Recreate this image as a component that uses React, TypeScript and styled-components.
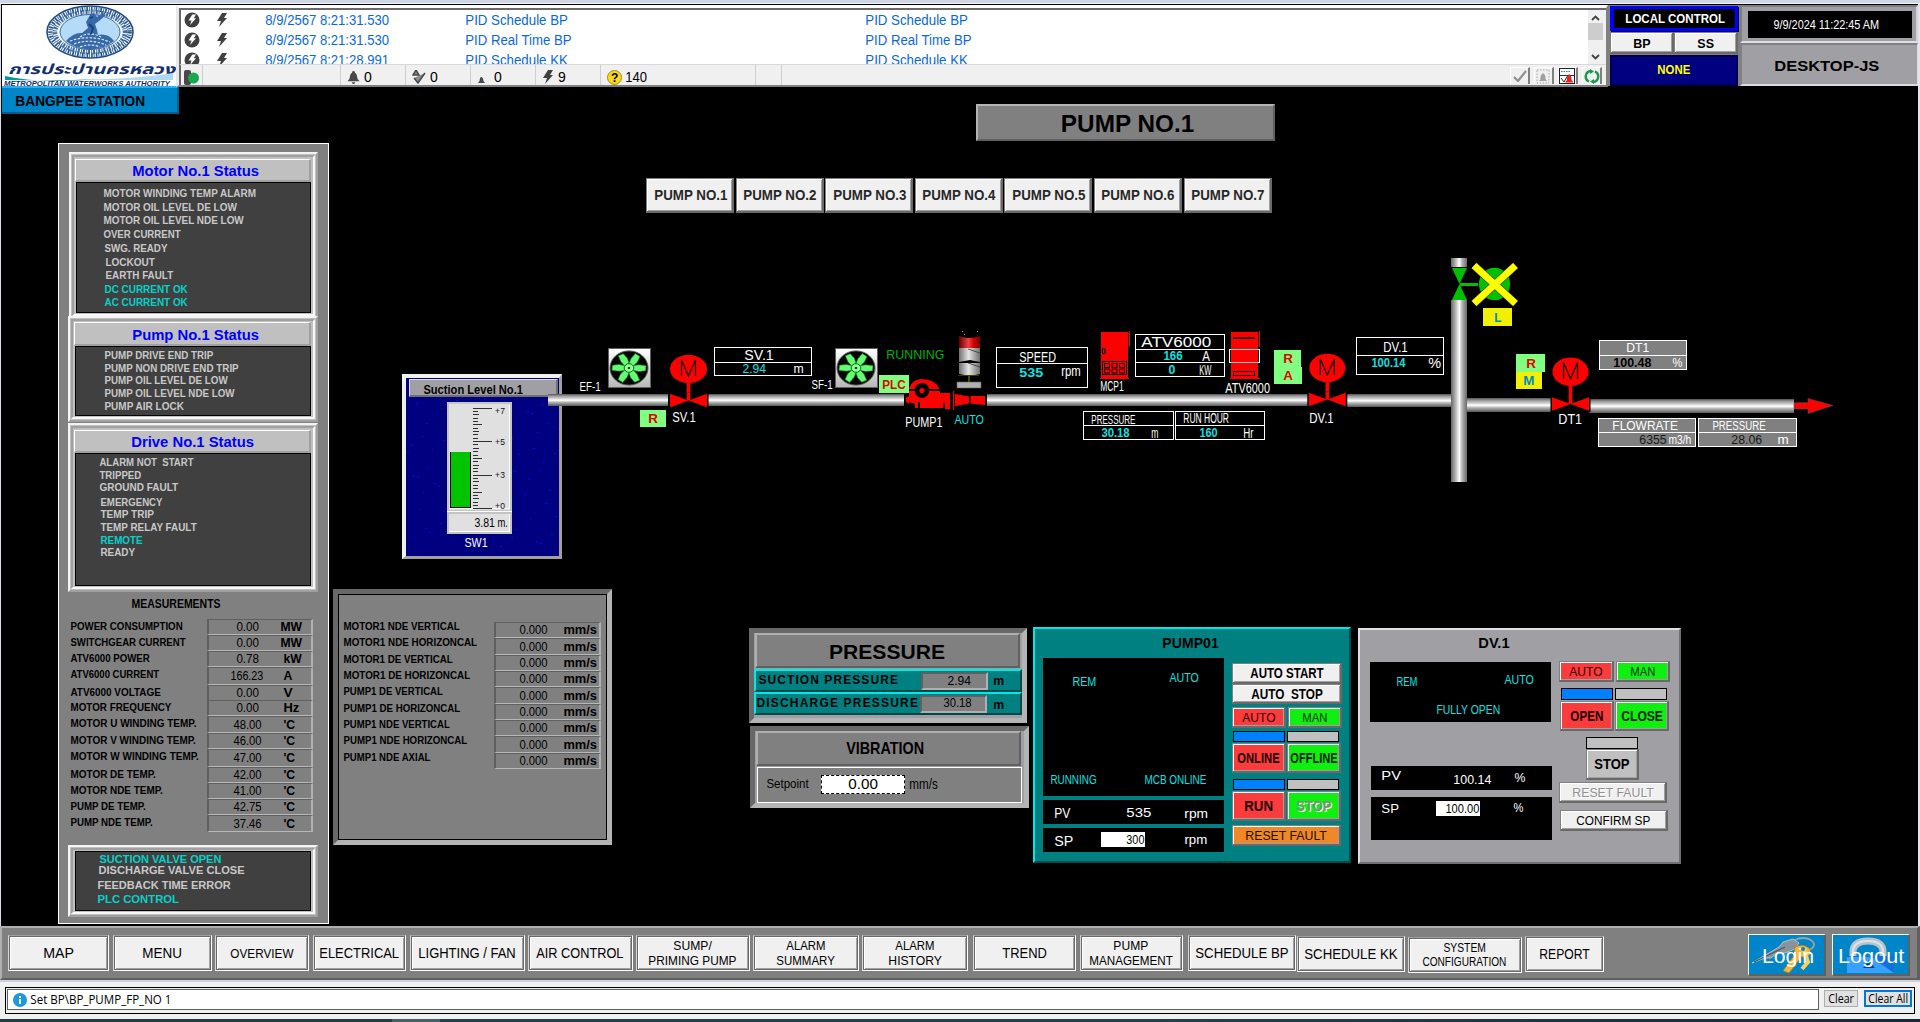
import React, { useLayoutEffect, useRef } from "react";
import styled, { createGlobalStyle, css } from "styled-components";

const Global = createGlobalStyle`
  *, *::before, *::after { box-sizing: border-box; }
  html, body { margin: 0; padding: 0; background: #000; overflow: hidden; }
  body { font-family: "Liberation Sans", Arial, sans-serif; font-size: 12px; color: #000; }
`;

/* ---------- text that is stretched to a fixed width ---------- */

const FitBox = styled.span<{ $w: number; $s: number; $b?: boolean; $c?: string; $ml: number; $mt: number; $f?: string; $etched?: boolean }>`
  display: block;
  flex: none;
  width: ${(p) => p.$w}px;
  height: ${(p) => p.$s + 2}px;
  line-height: ${(p) => p.$s + 2}px;
  margin: ${(p) => p.$mt}px 0 0 ${(p) => p.$ml}px;
  font-size: ${(p) => p.$s}px;
  font-weight: ${(p) => (p.$b ? 700 : 400)};
  color: ${(p) => p.$c || "#000"};
  white-space: pre;
  ${(p) => p.$f && css`font-family: ${p.$f};`}
  ${(p) => p.$etched && css`text-shadow: 1px 1px 0 #fff;`}
`;
const FitInk = styled.span`
  display: inline-block;
  transform-origin: 0 50%;
`;

type FitProps = {
  children: string; w: number; s?: number; b?: boolean; c?: string;
  ml?: number; mt?: number; f?: string; etched?: boolean; stretch?: boolean;
};

function Fit({ children, w, s = 12, b, c, ml = 0, mt = 0, f, etched, stretch }: FitProps) {
  const ref = useRef<HTMLSpanElement>(null);
  useLayoutEffect(() => {
    const el = ref.current;
    if (!el) return;
    const target = w + s * 0.1;
    const natural = el.offsetWidth;
    const shift = `translateX(${-s * 0.05}px)`;
    if (!stretch && target / natural > 1.1 && children.length > 4) {
      el.style.letterSpacing = `${(target - natural) / (children.length - 1)}px`;
      el.style.transform = shift;
    } else {
      el.style.transform = `${shift} scaleX(${target / natural})`;
    }
  }, []);
  return (
    <FitBox $w={w} $s={s} $b={b} $c={c} $ml={ml} $mt={mt} $f={f} $etched={etched}>
      <FitInk ref={ref}>{children}</FitInk>
    </FitBox>
  );
}

const CYAN = "#14e0e0";
const COND = '"Open Sans", "Noto Sans", sans-serif';

/* ---------- frame ---------- */

const Screen = styled.div`
  width: 1920px;
  height: 1022px;
  display: flex;
  flex-direction: column;
  background: #000;
  overflow: hidden;
`;
const TopEdge = styled.div`
  height: 4px;
  flex: none;
  background: #cfd6e4;
  border-bottom: 1px solid #f4f4f8;
`;
const Header = styled.header`
  display: flex;
  height: 82px;
  flex: none;
  padding: 1px 0 0 0;
  border-left: 1px solid #d8dce6;
  border-right: 2px solid #e4e4ea;
`;
const LogoCell = styled.div`
  width: 174px;
  margin-left: 1px;
  height: 81px;
  background: #fff;
  flex: none;
`;

/* ---------- alarm banner ---------- */

const AlarmPanel = styled.div`
  width: 1432px;
  height: 82px;
  flex: none;
  background: #f0f0f0;
  border: 3px solid #fff;
  border-left-color: #e8e8e8;
  border-right: 2px solid #808080;
  border-bottom: 2px solid #808080;
  display: flex;
  flex-direction: column;
  position: relative;
  z-index: 1;
`;
const AlarmTop = styled.div`
  display: flex;
  height: 56px;
  flex: none;
  border-top: 2px solid #696969;
  border-left: 2px solid #696969;
  padding-right: 2px;
`;
const AlarmList = styled.div`
  flex: 1;
  background: #fff;
  overflow: hidden;
`;
const AlarmRow = styled.div`
  height: 20px;
  display: grid;
  grid-template-columns: 32px 50px 200px 400px 200px;
  align-items: center;
  padding-left: 3px;
`;
const Scroll = styled.div`
  width: 16px;
  background: #f0f0f0;
  display: flex;
  flex-direction: column;
  align-items: center;
  justify-content: space-between;
  padding: 5px 1px 4px 0;
`;
const Thumb = styled.div`
  width: 15px;
  height: 17px;
  background: #cdcdcd;
  margin-bottom: 12px;
`;
const AlarmStatus = styled.div`
  display: flex;
  height: 21px;
  border-left: 2px solid #696969;
  border-top: 1px solid #d8d8d8;
  padding-right: 4px;
`;
const StatusCell = styled.div<{ $w: number }>`
  width: ${(p) => p.$w}px;
  border-right: 1px solid #cfcfcf;
  display: flex;
  align-items: center;
  gap: 4px;
  padding: 4px 0 0 6px;
  font-size: 14px;
`;
const ToolRow = styled.div`
  margin-left: auto;
  display: flex;
  gap: 4px;
  padding-top: 2px;
`;
const Tool = styled.div`
  width: 20px;
  height: 17px;
  border-right: 2px solid #808080;
  border-left: 1px solid #fff;
  border-top: 1px solid #fff;
  display: flex;
  align-items: center;
  justify-content: center;
`;

/* ---------- header right ---------- */

const LocalPanel = styled.div`
  width: 132px;
  background: #808080;
  padding: 1px 2px 2px;
  display: grid;
  grid-template: 25px 22px 31px / 1fr;
  row-gap: 1px;
`;
const LocalTitle = styled.div`
  background: #000;
  border: 4px solid #0000ff;
  border-top-width: 3px;
  border-right-width: 3px;
  border-bottom-width: 3px;
  box-shadow: 1px 1px 0 #000050;
  display: flex;
  align-items: center;
  justify-content: center;
`;
const LocalButtons = styled.div`
  display: grid;
  grid-template-columns: 1fr 1fr;
`;
const LocalNone = styled.div`
  background: #000080;
  border: 2px solid #00004c;
  display: flex;
  align-items: center;
  justify-content: center;
  padding-bottom: 2px;
`;
const ClockPanel = styled.div`
  width: 178px;
  display: flex;
  flex-direction: column;
  background: #a0a0a4;
`;
const ClockBox = styled.div`
  height: 38px;
  border: 2px solid #808084;
  border-bottom-color: #e0e0e4;
  border-right-color: #d4d4d8;
  padding: 4px 4px 3px 6px;
  display: flex;
`;
const ClockFace = styled.div`
  flex: 1;
  background: #000;
  display: flex;
  align-items: center;
  padding-left: 26px;
`;
const HostBox = styled.div`
  flex: 1;
  border-top: 2px solid #808084;
  border-left: 2px solid #808084;
  border-bottom: 2px solid #dcdce0;
  border-right: 1px solid #dcdce0;
  display: flex;
  align-items: center;
  padding-left: 33px;
`;

/* ---------- buttons ---------- */

const Btn = styled.div<{ $w?: number; $h?: number; $bg?: string; $ml?: number }>`
  ${(p) => p.$w && css`width: ${p.$w}px;`}
  ${(p) => p.$h && css`height: ${p.$h}px;`}
  margin-left: ${(p) => p.$ml || 0}px;
  flex: none;
  background: ${(p) => p.$bg || "#f0f0f0"};
  border: 1px solid #808080;
  border-right: 2px solid #696969;
  border-bottom: 2px solid #696969;
  box-shadow: inset 1px 1px 0 #fff, inset -1px -1px 0 #a0a0a0;
  display: flex;
  flex-direction: column;
  align-items: center;
  justify-content: center;
`;
const Lamp = styled.div<{ $on?: boolean; $ml?: number; $h?: number }>`
  width: 52px;
  height: ${(p) => p.$h || 11}px;
  flex: none;
  margin-left: ${(p) => p.$ml || 0}px;
  border: 1px solid #000;
  background: ${(p) => (p.$on ? "#0080ff" : "#c0c0c0")};
`;

/* ---------- main area ---------- */

const Main = styled.main`
  display: flex;
  height: 840px;
  flex: none;
  border-left: 1px solid #d8dce6;
  border-right: 2px solid #e4e4ea;
`;
const LeftColumn = styled.div`
  width: 332px;
  flex: none;
`;
const Station = styled.div`
  width: 177px;
  height: 28px;
  margin-left: 1px;
  background: #0086c8;
  border-top: 2px solid #28b0f0;
  border-right: 2px solid #006090;
  border-bottom: 2px solid #005c8c;
  display: flex;
  align-items: center;
  padding: 2px 0 0 14px;
`;
const Sidebar = styled.aside`
  width: 271px;
  height: 781px;
  margin: 29px 0 0 57px;
  background: #808080;
  border: 1px solid #fff;
  padding-top: 8px;
`;
const Bevel = styled.div<{ $h: number; $ml: number; $mt?: number }>`
  width: ${(p) => (p.$ml === 10 ? 249 : 250)}px;
  height: ${(p) => p.$h}px;
  margin: ${(p) => p.$mt || 0}px 0 0 ${(p) => p.$ml}px;
  background: #c0c0c0;
  border: 2px solid #f4f4f4;
  border-right-color: #a0a0a0;
  border-bottom-color: #a0a0a0;
  padding: 1px;
`;
const BevelInner = styled.div`
  height: 100%;
  border: 2px solid #a0a0a0;
  border-right-color: #f8f8f8;
  border-bottom-color: #f8f8f8;
  padding: 1px 2px 1px 1px;
  display: flex;
  flex-direction: column;
`;
const Plate = styled.div<{ $h: number; $pl: number; $mt?: number }>`
  height: ${(p) => p.$h}px;
  margin-top: ${(p) => p.$mt || 0}px;
  flex: none;
  background: #c0c0c0;
  border: 1px solid #fff;
  border-right: 2px solid #a0a0a0;
  border-bottom: 2px solid #a0a0a0;
  display: flex;
  align-items: center;
  padding-left: ${(p) => p.$pl}px;
`;
const Dark = styled.div<{ $pt: number }>`
  flex: 1;
  background: #404040;
  border: 1px solid #000;
  padding-top: ${(p) => p.$pt}px;
  margin-left: 1px;
`;
const Line = styled.div<{ $gap: number; $pl: number }>`
  height: 12px;
  margin-top: ${(p) => p.$gap}px;
  padding-left: ${(p) => p.$pl}px;
  display: flex;
  align-items: center;
`;

type Row = [text: string, indent: number, width: number, center: number, on?: boolean];

function StatusLines({ rows, size = 11 }: { rows: Row[]; size?: number }) {
  return (
    <>
      {rows.map(([t, x, w, y, on], i) => (
        <Line key={t} $pl={x} $gap={i ? y - rows[i - 1][3] - 12 : 0}>
          <Fit w={w} s={size} b c={on ? "#08d0c8" : "#c8c8c8"}>{t}</Fit>
        </Line>
      ))}
    </>
  );
}

const motorRows: Row[] = [
  ["MOTOR WINDING TEMP ALARM", 27, 151, 193],
  ["MOTOR OIL LEVEL DE LOW", 27, 132, 207],
  ["MOTOR OIL LEVEL NDE LOW", 27, 139, 220],
  ["OVER CURRENT", 27, 76, 234],
  ["SWG. READY", 28, 62, 248],
  ["LOCKOUT", 29, 48, 262],
  ["EARTH FAULT", 29, 67, 275],
  ["DC CURRENT OK", 28, 82, 289, true],
  ["AC CURRENT OK", 28, 82, 302, true],
];
const pumpRows: Row[] = [
  ["PUMP DRIVE END TRIP", 29, 108, 355],
  ["PUMP NON DRIVE END TRIP", 29, 133, 368],
  ["PUMP OIL LEVEL DE LOW", 29, 122, 380],
  ["PUMP OIL LEVEL NDE LOW", 29, 129, 393],
  ["PUMP AIR LOCK", 29, 78, 406],
];
const driveRows: Row[] = [
  ["ALARM NOT  START", 24, 93, 461],
  ["TRIPPED", 24, 41, 474],
  ["GROUND FAULT", 24, 78, 486],
  ["EMERGENCY", 25, 61, 501],
  ["TEMP TRIP", 25, 52, 513],
  ["TEMP RELAY FAULT", 25, 95, 526],
  ["REMOTE", 25, 41, 539, true],
  ["READY", 25, 34, 551],
];
const valveRows: Row[] = [
  ["SUCTION VALVE OPEN", 24, 121, 859, true],
  ["DISCHARGE VALVE CLOSE", 23, 145, 870],
  ["FEEDBACK TIME ERROR", 22, 132, 885],
  ["PLC CONTROL", 22, 80, 899, true],
];

const MeasureTitle = styled.div`
  height: 27px;
  padding: 5px 0 0 73px;
`;
const MeasureRow = styled.div<{ $h: number; $w: number; $valW: number }>`
  height: ${(p) => p.$h}px;
  display: grid;
  grid-template-columns: ${(p) => p.$w}px ${(p) => p.$valW}px;
`;
const MeasureLabel = styled.div<{ $pt: number }>`
  padding: ${(p) => p.$pt}px 0 0 0;
`;
const MeasureValue = styled.div`
  border-top: 1px solid #606060;
  border-left: 2px solid #606060;
  border-right: 2px solid #b0b0b0;
  border-bottom: 1px solid #b8b8b8;
  display: grid;
  grid-template-columns: 1fr 38px;
  align-items: center;
  justify-items: center;
`;
const UnitCell = styled.div`
  justify-self: start;
`;

type Measure = [label: string, w: number, value: string, vw: number, unit: string, uw: number, h: number];
const measures: Measure[] = [
  ["POWER CONSUMPTION", 111, "0.00", 21, "MW", 20, 16],
  ["SWITCHGEAR CURRENT", 114, "0.00", 21, "MW", 20, 16],
  ["ATV6000 POWER", 78, "0.78", 21, "kW", 17, 16],
  ["ATV6000 CURRENT", 88, "166.23", 32, "A", 8, 18],
  ["ATV6000 VOLTAGE", 89, "0.00", 21, "V", 8, 15],
  ["MOTOR FREQUENCY", 100, "0.00", 21, "Hz", 15, 16],
  ["MOTOR U WINDING TEMP.", 125, "48.00", 27, "'C", 11, 17],
  ["MOTOR V WINDING TEMP.", 124, "46.00", 27, "'C", 11, 16],
  ["MOTOR W WINDING TEMP.", 127, "47.00", 27, "'C", 11, 18],
  ["MOTOR DE TEMP.", 84, "42.00", 27, "'C", 11, 16],
  ["MOTOR NDE TEMP.", 91, "41.00", 27, "'C", 11, 16],
  ["PUMP DE TEMP.", 74, "42.75", 27, "'C", 11, 16],
  ["PUMP NDE TEMP.", 81, "37.46", 27, "'C", 11, 17],
];
const MeasureTable = styled.div`
  padding-left: 12px;
  margin-bottom: 13px;
`;

/* ---------- process area ---------- */

const Process = styled.div`
  flex: 1;
  display: flex;
  flex-direction: column;
`;
const TitlePlate = styled.div`
  width: 299px;
  height: 37px;
  margin: 18px 0 0 643px;
  background: #808080;
  border: 2px solid #b4b4b4;
  border-right-color: #606060;
  border-bottom-color: #606060;
  display: flex;
  align-items: center;
  justify-content: center;
  padding: 3px 0 0 3px;
  flex: none;
`;
const PumpTabs = styled.div`
  display: grid;
  grid-template-columns: repeat(7, 88px);
  gap: 1.6px;
  height: 35px;
  margin: 37px 0 0 313px;
  flex: none;
`;
const Canvas = styled.div`
  position: relative;
  height: 376px;
  flex: none;
`;
const Drawing = styled.svg`
  position: absolute;
  left: 0;
  top: 0;
`;
const Pin = styled.div<{ $x: number; $y: number; $w?: number; $h?: number }>`
  position: absolute;
  left: ${(p) => p.$x - 333}px;
  top: ${(p) => p.$y - 213}px;
  ${(p) => p.$w && css`width: ${p.$w}px;`}
  ${(p) => p.$h && css`height: ${p.$h}px;`}
`;
const Badge = styled(Pin)<{ $bg: string }>`
  background: ${(p) => p.$bg};
  display: flex;
  align-items: center;
  justify-content: center;
`;
const Readout = styled(Pin)<{ $bg?: string }>`
  border: 1px solid #fff;
  background: ${(p) => p.$bg || "#000"};
`;
const ReadRow = styled.div<{ $h: number; $line?: boolean }>`
  height: ${(p) => p.$h}px;
  display: flex;
  align-items: center;
  ${(p) => p.$line && css`border-bottom: 1px solid #fff;`}
`;

/* label whose vertical middle is at y */
function Label({ x, y, w, s = 14, b, c = "#fff", children }: { x: number; y: number; w: number; s?: number; b?: boolean; c?: string; children: string }) {
  return (
    <Pin $x={x} $y={y - (s + 2) / 2}>
      <Fit w={w} s={s} b={b} c={c}>{children}</Fit>
    </Pin>
  );
}

const Tank = styled(Pin)`
  background: #000080;
  border: 4px solid #f0f0f0;
  border-right: 3px solid #a0a0a4;
  border-bottom: 3px solid #a0a0a4;
  display: flex;
  flex-direction: column;
  align-items: flex-start;
`;
const TankPlate = styled.div`
  width: 149px;
  height: 18px;
  margin: 1px 0 0 3px;
  background: #a0a0a4;
  border: 1px solid #e0e0e4;
  border-right: 2px solid #707074;
  border-bottom: 2px solid #707074;
  display: flex;
  align-items: center;
  padding: 4px 0 0 14px;
  position: relative;
`;
const Gauge = styled.div`
  width: 65px;
  height: 110px;
  margin: 5px 0 0 41px;
  background: #e0e0e0;
  border: 2px solid #c4c4c4;
  position: relative;
`;
const GaugeValue = styled.div`
  width: 65px;
  height: 22px;
  margin: 0 0 0 41px;
  background: #e0e0e0;
  border: 2px solid #c4c4c4;
  box-shadow: inset 0 -1px 0 #fff, inset -1px 0 0 #fff, 0 -1px 0 #fff;
  display: flex;
  align-items: center;
  position: relative;
`;
const Speckle = styled.svg`
  position: absolute;
  left: 0;
  top: 0;
`;

function MotorValve({ cx, cy, py, rx = 18.5 }: { cx: number; cy: number; py: number; rx?: number }) {
  return (
    <g>
      <ellipse cx={cx} cy={cy} rx={rx} ry={14.2} fill="#f00" />
      <rect x={cx - 1.8} y={cy + 13} width={3.6} height={py - cy - 13} fill="#f00" />
      <rect x={cx - 20} y={py - 8} width={40} height={16} fill="#000" />
      <rect x={cx - 1.8} y={py - 8} width={3.6} height={8} fill="#f00" />
      <path d={`M${cx - 18.5} ${py - 6.8}L${cx} ${py}L${cx - 18.5} ${py + 6.8}ZM${cx + 18.5} ${py - 6.8}L${cx} ${py}L${cx + 18.5} ${py + 6.8}Z`} fill="#f00" />
      <path d={`M${cx - 7} ${cy + 7}V${cy - 9}L${cx} ${cy + 7}L${cx + 7} ${cy - 9}V${cy + 7}`} stroke="#000" strokeWidth="1.2" fill="none" />
    </g>
  );
}

function Fan({ x, y }: { x: number; y: number }) {
  return (
    <g transform={`translate(${x} ${y})`}>
      <rect x=".5" y=".5" width="42" height="39" fill="url(#fanbg)" stroke="#606060" />
      <g transform="translate(21 20) scale(1 .9)">
        <circle r="19" fill="#000" stroke="#585858" />
        {[0, 60, 120, 180, 240, 300].map((a) => (
          <path key={a} transform={`rotate(${a})`} d="M4 -2.500L10 -3.500L17 -2.500L16.500 3L10 4L4 2.500Z" fill="#66fa72" stroke="#009820" strokeWidth=".5" />
        ))}
        <circle r="4.800" fill="#98ff9c" stroke="#086010" strokeWidth="1" />
        <rect x="-1.2" y="-1.2" width="2.4" height="2.4" fill="#006000" />
      </g>
    </g>
  );
}

const ticks: React.ReactNode[] = [];
for (let i = 0; i <= 30; i++) {
  const y = 3.5 + i * 3.36;
  const w = i % 10 === 0 ? 19 : i % 5 === 0 ? 9 : i % 5 === 2 ? 6 : 5;
  ticks.push(<rect key={i} x={24} y={Math.round(y)} width={w} height={1} fill="#303030" />);
}
const specks: React.ReactNode[] = [];
for (let i = 0; i < 95; i++) {
  const col = (i * 37) % 151;
  const row = (i * 61 + ((i * i) % 13)) % 172;
  specks.push(<rect key={i} x={col} y={row} width={i % 3 ? 2 : 1} height={1} fill="#0808e0" />);
}

function Plant() {
  return (
    <Canvas>
      <Tank $x={402} $y={374} $w={160} $h={185}>
        <Speckle width="153" height="178">{specks}</Speckle>
        <TankPlate><Fit w={98} s={12} b>Suction Level No.1</Fit></TankPlate>
        <Gauge>
          <svg width="61" height="106">
            <path d="M0 104.5H60.5V1" stroke="#fff" fill="none" />
            <rect x="1" y="48" width="21" height="56" fill="#000" />
            <rect x="2" y="48" width="19" height="55" fill="#00c400" />
            {ticks}
            <g fontSize="8.5" fill="#111">
              <text x="46" y="10" textLength="10">+7</text>
              <text x="46" y="41" textLength="10">+5</text>
              <text x="46" y="74" textLength="10">+3</text>
              <text x="46" y="105" textLength="10">+0</text>
            </g>
          </svg>
        </Gauge>
        <GaugeValue>
          <Fit w={19} s={12} ml={26}>3.81</Fit>
          <Fit w={9} s={12} ml={4}>m.</Fit>
        </GaugeValue>
        <Fit w={22} s={12} c="#fff" ml={59} mt={2}>SW1</Fit>
      </Tank>

      <Drawing width="1585" height="376" viewBox="333 213 1585 376">
        <defs>
          <linearGradient id="pipeH" x2="0" y2="1">
            <stop offset="0" stopColor="#505050" /><stop offset=".14" stopColor="#909090" />
            <stop offset=".34" stopColor="#c8c8c8" /><stop offset=".52" stopColor="#fff" />
            <stop offset=".68" stopColor="#b8b8b8" /><stop offset=".86" stopColor="#808080" /><stop offset="1" stopColor="#585858" />
          </linearGradient>
          <linearGradient id="pipeV">
            <stop offset="0" stopColor="#686868" /><stop offset=".15" stopColor="#909090" />
            <stop offset=".35" stopColor="#c8c8c8" /><stop offset=".52" stopColor="#fff" />
            <stop offset=".68" stopColor="#b8b8b8" /><stop offset="1" stopColor="#686868" />
          </linearGradient>
          <linearGradient id="fanbg" x2="0" y2="1"><stop offset="0" stopColor="#fff" /><stop offset="1" stopColor="#b8b8b8" /></linearGradient>
          <linearGradient id="redDrum"><stop offset="0" stopColor="#600" /><stop offset=".45" stopColor="#f04040" /><stop offset=".7" stopColor="#d00000" /><stop offset="1" stopColor="#700" /></linearGradient>
          <linearGradient id="greyDrum"><stop offset="0" stopColor="#707070" /><stop offset=".45" stopColor="#e4e4e4" /><stop offset="1" stopColor="#707070" /></linearGradient>
        </defs>

        <rect x="548" y="394" width="120" height="12" fill="url(#pipeH)" />
        <rect x="708" y="394" width="196" height="12" fill="url(#pipeH)" />
        <rect x="987" y="394" width="321" height="12" fill="url(#pipeH)" />
        <rect x="1347" y="394" width="109" height="13" fill="url(#pipeH)" />
        <rect x="1466" y="398" width="86" height="14" fill="url(#pipeH)" />
        <rect x="1589" y="399" width="205" height="14" fill="url(#pipeH)" />
        <rect x="1451" y="258" width="16" height="9" fill="url(#pipeV)" />
        <rect x="1451" y="300" width="16" height="182" fill="url(#pipeV)" />

        <Fan x={608} y={348} />
        <Fan x={835} y={348} />
        <MotorValve cx={688.5} cy={369} py={400.5} />
        <MotorValve cx={1327.3} cy={368} py={399.5} rx={18} />
        <MotorValve cx={1570.5} cy={371.8} py={404} rx={18} />

        {/* beacon */}
        <path d="M962 331h1v1h-1zM977 331h1v1h-1zM964 334h1v1h-1z" fill="#f88" />
        <path d="M959 336Q969 340 980 336V348H959Z" fill="url(#redDrum)" />
        <path d="M959 348H980V362L970 360L959 362Z" fill="url(#greyDrum)" />
        <path d="M959 363H980V374L970 376L959 374Z" fill="url(#greyDrum)" />
        <path d="M968 349L980 353M968 363L980 367" stroke="#333" strokeWidth=".8" />
        <rect x="968" y="375" width="2" height="8" fill="#4c4c00" />
        <path d="M958 375.5h21" stroke="#3c3c00" />
        <rect x="957" y="382" width="24" height="6" fill="#b0b0b0" stroke="#606060" strokeWidth=".6" />

        {/* pump */}
        <g fill="#f00">
          <path d="M909 388Q912 380 921 379Q935 379 939.5 389H929A7 6 0 0 0 915 389H909Z" />
          <path d="M909 391H915A7 7 0 0 0 929 391H940V393H950V409H945V403H943V408H920V402H918V408H915V404L909 402Z" />
          <path d="M906 397h3v7l-3-2z" />
          <rect x="953" y="391" width="1.2" height="19" />
          <path d="M955 394L969 396.5V403.5L955 406Z" />
          <path d="M970.5 396H985V405L970.5 403.5Z" />
          <circle cx="922" cy="390.5" r="2.6" />
        </g>
        <circle cx="922" cy="390.5" r="4.2" fill="none" stroke="#000" strokeWidth="1.2" />

        {/* panels */}
        <rect x="1101" y="332" width="27" height="46" fill="#f00" />
        <path d="M1129.5 331V347M1100 378.5H1129" stroke="#f00" />
        <rect x="1102.5" y="348.5" width="2.5" height="5" fill="#f00" stroke="#000" />
        <rect x="1102.5" y="361.5" width="24" height="13" fill="none" stroke="#000" />
        <path d="M1104.5 363.5h5v4h-5zM1112 363.5h5v4h-5zM1119.500 363.500h5v4h-5zM1104.500 369h5v4h-5zM1112 369h5v4h-5zM1119.500 369h5v4h-5z" fill="none" stroke="#000" />
        <rect x="1231" y="332" width="27" height="46" fill="#f00" />
        <path d="M1259.500 331V347M1230 378.500H1260" stroke="#f00" />
        <path d="M1233 338H1255" stroke="#000" strokeWidth="1.6" />
        <rect x="1233.500" y="371.500" width="21" height="4" fill="none" stroke="#000" />
        <rect x="1229.500" y="349.500" width="30" height="13" fill="none" stroke="#fff" />
        <path d="M1231 349.500H1258M1231 362.500H1258" stroke="#60d8d8" />

        {/* vent valve */}
        <g fill="#00c000">
          <path d="M1452 268H1467L1459.500 284ZM1452 300H1467L1459.500 284Z" />
          <rect x="1460" y="283" width="18" height="3" />
          <ellipse cx="1494.500" cy="284" rx="15.600" ry="16.200" />
        </g>
        <path d="M1474 265.500L1515.500 303.500M1515.500 265.500L1474 303.500" stroke="#3c3c00" strokeWidth="8" />
        <path d="M1474 265.500L1515.500 303.500M1515.500 265.500L1474 303.500" stroke="#ff0" strokeWidth="7" />

        <path d="M1794 402.700H1808V398.500L1833 405.500L1808 413.500V409H1794Z" fill="#f00" stroke="#505050" strokeWidth=".6" />
      </Drawing>

      <Label x={580} y={387} w={20} s={12}>EF-1</Label>
      <Label x={812} y={385} w={20} s={12}>SF-1</Label>
      <Label x={673} y={417} w={22}>SV.1</Label>
      <Label x={887} y={354.500} w={57} s={13} c="#00b400">RUNNING</Label>
      <Label x={906} y={421} w={36} s={15}>PUMP1</Label>
      <Label x={955} y={420} w={28} s={12} c={CYAN}>AUTO</Label>
      <Label x={1101} y={386} w={22} s={14}>MCP1</Label>
      <Label x={1226} y={388} w={43} s={14}>ATV6000</Label>
      <Label x={1310} y={417} w={23} s={15}>DV.1</Label>
      <Label x={1559} y={419} w={22} s={14}>DT1</Label>

      <Badge $x={640} $y={410} $w={26} $h={17} $bg="#80ff80"><Fit w={8} s={13} b c="#e00000">R</Fit></Badge>
      <Badge $x={879} $y={375} $w={30} $h={18} $bg="#80ff80"><Fit w={22} s={13} b c="#e00000">PLC</Fit></Badge>
      <Badge $x={1274} $y={350} $w={27} $h={17} $bg="#80ff80"><Fit w={8} s={13} b c="#e00000">R</Fit></Badge>
      <Badge $x={1274} $y={367} $w={28} $h={17} $bg="#80ff80"><Fit w={8} s={13} b c="#e00000">A</Fit></Badge>
      <Badge $x={1483} $y={308} $w={29} $h={18} $bg="#f0f000"><Fit w={6} s={13} b c="#0088c8">L</Fit></Badge>
      <Badge $x={1516} $y={354} $w={29} $h={18} $bg="#80ff80"><Fit w={8} s={13} b c="#e00000">R</Fit></Badge>
      <Badge $x={1516} $y={372} $w={26} $h={17} $bg="#f0f000"><Fit w={10} s={13} b c="#0088c8">M</Fit></Badge>

      <Readout $x={714} $y={347} $w={98} $h={29}>
        <ReadRow $h={15} $line><Fit w={28} s={14} c="#fff" ml={30}>SV.1</Fit></ReadRow>
        <ReadRow $h={12}><Fit w={22} s={12} c={CYAN} ml={28}>2.94</Fit><Fit w={9} s={12} c="#fff" ml={29}>m</Fit></ReadRow>
      </Readout>
      <Readout $x={996} $y={347} $w={92} $h={41}>
        <ReadRow $h={16} $line><Fit w={35} s={14} c="#fff" ml={23} mt={2}>SPEED</Fit></ReadRow>
        <ReadRow $h={15}><Fit w={23} s={13} b c={CYAN} ml={23} mt={1}>535</Fit><Fit w={18} s={14} c="#fff" ml={19} mt={-2}>rpm</Fit></ReadRow>
      </Readout>
      <Readout $x={1135} $y={334} $w={90} $h={43}>
        <ReadRow $h={15} $line><Fit w={68} s={14} c="#fff" ml={6} mt={-1} stretch>ATV6000</Fit></ReadRow>
        <ReadRow $h={13} $line><Fit w={18} s={12} b c={CYAN} ml={28}>166</Fit><Fit w={6} s={14} c="#fff" ml={21} mt={-1}>A</Fit></ReadRow>
        <ReadRow $h={13}><Fit w={6} s={12} b c={CYAN} ml={33}>0</Fit><Fit w={11} s={14} c="#fff" ml={25}>KW</Fit></ReadRow>
      </Readout>
      <Readout $x={1083} $y={411} $w={91} $h={29}>
        <ReadRow $h={14} $line><Fit w={43} s={13} c="#fff" ml={8} mt={1}>PRESSURE</Fit></ReadRow>
        <ReadRow $h={13}><Fit w={27} s={12} b c={CYAN} ml={18} mt={1}>30.18</Fit><Fit w={6} s={14} c="#fff" ml={23}>m</Fit></ReadRow>
      </Readout>
      <Readout $x={1175} $y={411} $w={90} $h={29}>
        <ReadRow $h={14} $line><Fit w={44} s={14} c="#fff" ml={8} mt={-1}>RUN HOUR</Fit></ReadRow>
        <ReadRow $h={13}><Fit w={17} s={12} b c={CYAN} ml={24} mt={1}>160</Fit><Fit w={9} s={14} c="#fff" ml={27}>Hr</Fit></ReadRow>
      </Readout>
      <Readout $x={1356} $y={337} $w={88} $h={38}>
        <ReadRow $h={18} $line><Fit w={23} s={15} c="#fff" ml={27}>DV.1</Fit></ReadRow>
        <ReadRow $h={14}><Fit w={33} s={12} b c={CYAN} ml={15} mt={-1}>100.14</Fit><Fit w={11} s={14} c="#fff" ml={24}>%</Fit></ReadRow>
      </Readout>
      <Readout $x={1599} $y={340} $w={88} $h={30} $bg="#808080">
        <ReadRow $h={15} $line><Fit w={22} s={13} c="#fff" ml={27} mt={-2}>DT1</Fit></ReadRow>
        <ReadRow $h={13}><Fit w={37} s={13} b ml={14}>100.48</Fit><Fit w={9} s={12} c="#fff" ml={22}>%</Fit></ReadRow>
      </Readout>
      <Readout $x={1598} $y={418} $w={98} $h={29} $bg="#808080">
        <ReadRow $h={14} $line><Fit w={64} s={13} c="#fff" ml={14}>FLOWRATE</Fit></ReadRow>
        <ReadRow $h={13}><Fit w={26} s={13} c="#181818" ml={41}>6355</Fit><Fit w={22} s={12} c="#fff" ml={3}>m3/h</Fit></ReadRow>
      </Readout>
      <Readout $x={1698} $y={418} $w={99} $h={29} $bg="#808080">
        <ReadRow $h={14} $line><Fit w={52} s={12} c="#fff" ml={14}>PRESSURE</Fit></ReadRow>
        <ReadRow $h={13}><Fit w={30} s={13} c="#181818" ml={33}>28.06</Fit><Fit w={10} s={12} c="#fff" ml={16}>m</Fit></ReadRow>
      </Readout>
    </Canvas>
  );
}

/* ---------- lower panels ---------- */

const LowerRow = styled.div`
  display: flex;
  align-items: flex-start;
  flex: none;
`;
const Sunken = styled.div<{ $w: number; $h: number; $ml?: number; $mt?: number; $bg?: string }>`
  width: ${(p) => p.$w}px;
  height: ${(p) => p.$h}px;
  margin: ${(p) => p.$mt || 0}px 0 0 ${(p) => p.$ml || 0}px;
  border: 5px solid #686868;
  border-right-color: #b4b4b4;
  border-bottom-color: #b4b4b4;
  background: ${(p) => p.$bg || "#808080"};
`;
const VibrationInner = styled.div`
  height: 246px;
  border: 1px solid #000;
  padding: 27px 0 0 5px;
`;
type Vib = [label: string, w: number];
const vibrations: Vib[] = [
  ["MOTOR1 NDE VERTICAL", 115],
  ["MOTOR1 NDE HORIZONCAL", 133],
  ["MOTOR1 DE VERTICAL", 108],
  ["MOTOR1 DE HORIZONCAL", 126],
  ["PUMP1 DE VERTICAL", 98],
  ["PUMP1 DE HORIZONCAL", 116],
  ["PUMP1 NDE VERTICAL", 105],
  ["PUMP1 NDE HORIZONCAL", 123],
  ["PUMP1 NDE AXIAL", 86],
];
const MiddleStack = styled.div`
  margin: 39px 0 0 137px;
`;
const PressTitle = styled.div<{ $h: number; $pl: number; $pt: number }>`
  width: 265px;
  height: ${(p) => p.$h}px;
  margin-left: 1px;
  background: #808080;
  border: 2px solid #b0b0b0;
  border-right-color: #606060;
  border-bottom-color: #606060;
  display: flex;
  align-items: center;
  padding: ${(p) => p.$pt}px 0 0 ${(p) => p.$pl}px;
`;
const TealRow = styled.div<{ $mt: number }>`
  width: 268px;
  height: 23px;
  margin-top: ${(p) => p.$mt}px;
  background: #008080;
  border: 2px solid #00e8e8;
  border-right-color: #004848;
  border-bottom-color: #004848;
  display: flex;
  align-items: center;
`;
const TealValue = styled.div<{ $ml: number; $pl: number }>`
  width: 67px;
  height: 18px;
  margin-left: ${(p) => p.$ml}px;
  padding-left: ${(p) => p.$pl}px;
  background: #808080;
  border: 2px solid #606060;
  border-right-color: #b0b0b0;
  border-bottom-color: #b0b0b0;
  display: flex;
  align-items: center;
`;
const SetpointRow = styled.div`
  width: 265px;
  height: 36px;
  margin: 1px 0 0 2px;
  border: 1px solid #fff;
  background: #808080;
  display: flex;
  align-items: center;
`;
const DashedInput = styled.div`
  width: 84px;
  height: 19px;
  margin: -2px 0 0 13px;
  background: #fff;
  border: 1px dashed #000;
  display: flex;
  align-items: center;
  justify-content: center;
`;
const Faceplate = styled.div<{ $w: number; $h: number; $ml: number; $mt: number; $bg: string; $hi: string; $lo: string }>`
  width: ${(p) => p.$w}px;
  height: ${(p) => p.$h}px;
  margin: ${(p) => p.$mt}px 0 0 ${(p) => p.$ml}px;
  background: ${(p) => p.$bg};
  border: 2px solid ${(p) => p.$hi};
  border-right-color: ${(p) => p.$lo};
  border-bottom-color: ${(p) => p.$lo};
  display: flex;
`;
const FaceLeft = styled.div<{ $pl: number; $w: number }>`
  width: ${(p) => p.$w}px;
  padding-left: ${(p) => p.$pl}px;
  flex: none;
`;
const FaceTitle = styled.div<{ $pl: number; $h: number; $pt: number }>`
  height: ${(p) => p.$h}px;
  padding: ${(p) => p.$pt}px 0 0 ${(p) => p.$pl}px;
`;
const Black = styled.div<{ $h: number; $mt?: number; $col?: boolean; $top?: boolean; $ml?: number }>`
  width: 181px;
  height: ${(p) => p.$h}px;
  margin: ${(p) => p.$mt || 0}px 0 0 ${(p) => p.$ml || 0}px;
  background: #000;
  display: flex;
  flex-direction: ${(p) => (p.$col ? "column" : "row")};
  align-items: ${(p) => (p.$top || p.$col ? "flex-start" : "center")};
`;
const BlackRow = styled.div<{ $mt: number; $pl: number }>`
  display: flex;
  margin-top: ${(p) => p.$mt}px;
  padding-left: ${(p) => p.$pl}px;
`;
const Field = styled.div<{ $ml: number; $mt?: number }>`
  width: 44px;
  height: 15px;
  margin: ${(p) => p.$mt || 0}px 0 0 ${(p) => p.$ml}px;
  background: #fff;
  display: flex;
  align-items: center;
  justify-content: flex-end;
  padding-right: 1px;
`;
const Keys = styled.div<{ $pt: number; $pl: number }>`
  padding: ${(p) => p.$pt}px 0 0 ${(p) => p.$pl}px;
  display: flex;
  flex-direction: column;
  align-items: flex-start;
`;
const KeyRow = styled.div<{ $mt: number; $gap?: number; $pl?: number }>`
  display: flex;
  margin-top: ${(p) => p.$mt}px;
  padding-left: ${(p) => p.$pl || 0}px;
  gap: ${(p) => p.$gap || 0}px;
`;
const RED = "#fa3c3c";
const GREEN = "#10f010";

/* ---------- bottom bars ---------- */

const NavBar = styled.nav`
  height: 54px;
  flex: none;
  background: #808080;
  border-top: 2px solid #b0b0b0;
  border-left: 2px solid #b0b0b0;
  border-bottom: 2px solid #606060;
  border-right: 3px solid #606060;
  display: flex;
  align-items: flex-start;
  padding: 7px 0 0 6px;
`;
const NavSlot = styled.div<{ $w: number; $ml: number; $mt?: number }>`
  width: ${(p) => p.$w}px;
  height: 36px;
  margin: ${(p) => p.$mt || 0}px 0 0 ${(p) => p.$ml}px;
  flex: none;
  background: #f0f0f0;
  border: 1px solid #d8d8d8;
  border-top-color: #a0a0a0;
  border-bottom: 1px solid #fff;
  border-right-color: #fff;
  box-shadow: inset 1px 1px 0 #696969, inset -1px -1px 0 #696969, inset 2px 2px 0 #fff, inset -2px -2px 0 #a0a0a0;
  display: flex;
  flex-direction: column;
  align-items: center;
  justify-content: center;
  padding: 0 1px 0 0;
`;
type Nav = [start: number, end: number, size: number, lines: [string, number][], drop?: number];
const navs: Nav[] = [
  [8, 109, 14, [["MAP", 29]]],
  [113, 212, 14, [["MENU", 38]]],
  [215, 309, 13, [["OVERVIEW", 62]]],
  [313, 406, 14, [["ELECTRICAL", 78]]],
  [410, 525, 14, [["LIGHTING / FAN", 96]]],
  [528, 633, 14, [["AIR CONTROL", 86]]],
  [636, 750, 13, [["SUMP/", 37], ["PRIMING PUMP", 87]]],
  [753, 859, 13, [["ALARM", 38], ["SUMMARY", 57]]],
  [862, 968, 13, [["ALARM", 38], ["HISTORY", 52]]],
  [973, 1076, 14, [["TREND", 43]]],
  [1080, 1183, 13, [["PUMP", 34], ["MANAGEMENT", 82]]],
  [1188, 1296, 14, [["SCHEDULE BP", 92]]],
  [1297, 1405, 14, [["SCHEDULE KK", 92]], 1],
  [1408, 1522, 12, [["SYSTEM", 41], ["CONFIGURATION", 83]], 2],
  [1525, 1604, 14, [["REPORT", 49]], 1],
];
const PicButton = styled.div<{ $ml: number }>`
  width: 78px;
  height: 42px;
  margin: -1px 0 0 ${(p) => p.$ml}px;
  flex: none;
  background: #0086c8;
  border: 1px solid #fff;
  border-right: 2px solid #606060;
  border-bottom: 2px solid #606060;
  position: relative;
`;
const PicText = styled.div<{ $x: number }>`
  position: absolute;
  left: ${(p) => p.$x}px;
  top: 10px;
`;
const PicArt = styled.svg`
  position: absolute;
  left: 0;
  top: 0;
`;
const Message = styled.footer`
  height: 39px;
  flex: none;
  background: #f0f0f0;
  border-top: 2px solid #ccd0dc;
  padding: 5px 5px 0 5px;
`;
const MessageFrame = styled.div`
  height: 27px;
  border: 1px solid #000;
  display: flex;
  padding: 1px 1px;
  align-items: flex-start;
`;
const MessageText = styled.div`
  width: 1812px;
  height: 21px;
  flex: none;
  background: #fff;
  border: 1px solid #606060;
  display: flex;
  align-items: center;
  padding-left: 5px;
`;
const SmallButton = styled.div<{ $w: number; $ml: number; $focus?: boolean }>`
  width: ${(p) => p.$w}px;
  height: 17px;
  flex: none;
  margin: 1px 0 0 ${(p) => p.$ml}px;
  background: #e1e1e1;
  border: ${(p) => (p.$focus ? "2px solid #0078d7" : "1px solid #adadad")};
  display: flex;
  align-items: center;
  justify-content: center;
`;
const TaskEdge = styled.div`
  height: 3px;
  flex: none;
  background: linear-gradient(90deg, #243c44 0 392px, #486068 392px 440px, #24404a 440px 60%, #182838);
`;

/* ---------- icons ---------- */

const BOLT = "M6 0H11L8 5H11L3 14L5 8H1Z";
const Bolt = () => <svg width="12" height="14"><path d={BOLT} fill="#404040" /></svg>;
const CircleBolt = () => (
  <svg width="16" height="16"><circle cx="8" cy="8" r="7.500" fill="#404040" /><path transform="translate(3.800 2.600) scale(.75)" d={BOLT} fill="#fff" /></svg>
);
const Bell = ({ c = "#484848", s = 13 }: { c?: string; s?: number }) => (
  <svg width={s} height={s} viewBox="0 0 14 14"><path d="M7 0Q8.500 0 8.500 1.500Q11 3 11 7Q11 9 13.500 11H.5Q3 9 3 7Q3 3 5.500 1.500Q5.500 0 7 0ZM5 12H9Q8 14 7 14Q6 14 5 12Z" fill={c} /></svg>
);

const ThaiText = styled.text`
  font-family: "Noto Sans Thai", "Noto Sans", "Liberation Sans", sans-serif;
`;

function Logo() {
  return (
    <svg width="174" height="81" viewBox="2 5 174 81">
      <ellipse cx="90" cy="32" rx="43" ry="26" fill="#f4f8fc" stroke="#1c4c88" strokeWidth="1.600" />
      <ellipse cx="90" cy="32" rx="39.500" ry="23" fill="none" stroke="#24508c" strokeWidth="4.500" strokeDasharray="1.600 1.300 .8 1" />
      <ellipse cx="90" cy="32" rx="35" ry="20" fill="none" stroke="#3a68a0" strokeWidth="4.500" strokeDasharray="1 1.300 2 .9" />
      <ellipse cx="90" cy="32" rx="30" ry="17.500" fill="#b4dcf8" stroke="#1c4c88" strokeWidth=".8" />
      <path d="M66 41Q74 32 82 33L88 28L86 22L90 15L94 13L97 17L103 13L106 15L99 21L95 24L97 30L98 35Q108 33 114 41Q104 49 90 49.500Q76 49 66 41Z" fill="#3868a8" />
      <path d="M70 41Q90 34 110 42M74 44Q90 38 106 45M80 47Q90 43 100 47M80 37Q90 31 101 37" stroke="#d8ecfc" strokeWidth="1.200" fill="none" strokeDasharray="2.500 1.500" />
      <path d="M90 18L93 17M89 24L93 28L91 34" stroke="#10407c" strokeWidth="1.800" fill="none" />
      <ThaiText x="8" y="74" fontSize="14" fontWeight="700" fontStyle="italic" fill="#14306c" textLength="167" lengthAdjust="spacingAndGlyphs">การประปานครหลวง</ThaiText>
      <path d="M5 76Q40 84 100 79Q60 81 5 80Z" fill="#009c9c" />
      <path d="M60 80Q130 80 173 73V80H60Z" fill="#acd8f4" />
      <text x="4" y="85.500" fontSize="6.500" fontWeight="700" fontStyle="italic" fill="#14306c" textLength="166" lengthAdjust="spacingAndGlyphs">METROPOLITAN WATERWORKS AUTHORITY</text>
    </svg>
  );
}

const alarms = [
  ["8/9/2567 8:21:31.530", "PID Schedule BP", 101],
  ["8/9/2567 8:21:31.530", "PID Real Time BP", 105],
  ["8/9/2567 8:21:28.991", "PID Schedule KK", 101],
] as const;

export default function App() {
  return (
    <Screen>
      <Global />
      <TopEdge />
      <Header>
        <LogoCell><Logo /></LogoCell>
        <AlarmPanel>
          <AlarmTop>
            <AlarmList>
              {alarms.map(([time, name, w], i) => (
                <AlarmRow key={i}>
                  <CircleBolt />
                  <Bolt />
                  <Fit w={122} s={14} c="#0a68dc">{time}</Fit>
                  <Fit w={w} s={14} c="#0a68dc">{name}</Fit>
                  <Fit w={w} s={14} c="#0a68dc">{name}</Fit>
                </AlarmRow>
              ))}
            </AlarmList>
            <Scroll>
              <svg width="9" height="6"><path d="M1 5L4.500 1.500L8 5" fill="none" stroke="#404040" strokeWidth="1.800" /></svg>
              <Thumb />
              <svg width="9" height="6"><path d="M1 1L4.500 4.500L8 1" fill="none" stroke="#404040" strokeWidth="1.800" /></svg>
            </Scroll>
          </AlarmTop>
          <AlarmStatus>
            <StatusCell $w={22}>
              <svg width="16" height="15" style={{ marginLeft: -3 }}><rect x="0" y="0" width="7" height="15" rx="2" fill="#484848" /><circle cx="9.500" cy="8" r="5.500" fill="#18a850" /></svg>
            </StatusCell>
            <StatusCell $w={138} />
            <StatusCell $w={65}><Bell />0</StatusCell>
            <StatusCell $w={65}>
              <svg width="14" height="14"><path d="M4 0L7 5H1ZM2 8L6 13L13 3" fill="#484848" stroke="#484848" strokeWidth="1.500" fillOpacity=".6" /></svg>0
            </StatusCell>
            <StatusCell $w={65}>
              <svg width="13" height="14"><path d="M4 7Q6 7 6.500 11L8 13H1L2.500 11Q3 7 4 7Z" fill="#484848" /></svg>0
            </StatusCell>
            <StatusCell $w={65}><Bolt />9</StatusCell>
            <StatusCell $w={155}>
              <svg width="15" height="15"><circle cx="7.500" cy="7.500" r="7" fill="#f8d818" stroke="#a88c10" /><text x="4" y="12" fontSize="12" fontWeight="700">?</text></svg>
              <Fit w={20} s={14}>140</Fit>
            </StatusCell>
            <StatusCell $w={26} />
            <ToolRow>
              <Tool><svg width="14" height="12"><path d="M1 7L5 11L13 1" stroke="#909090" strokeWidth="2.200" fill="none" /></svg></Tool>
              <Tool><svg width="15" height="15"><rect x="1" y="1" width="12" height="13" fill="none" stroke="#a8a8a8" strokeDasharray="1.500 1.500" /><path d="M7 4Q10 6 9.500 10L11 12H3L4.500 10Q4 6 7 4Z" fill="#a0a0a0" /></svg></Tool>
              <Tool><svg width="17" height="16"><rect x=".5" y=".5" width="15" height="15" fill="#fff" stroke="#202020" /><path d="M2 3.500H12" stroke="#2080e0" strokeDasharray="1.500 1" /><path d="M1 7.500H15M2 10L5 14L9 7" stroke="#303030" fill="none" /><path d="M10 6Q13 8 12.500 12L14.500 14.500H6L8 12Q7.500 8 10 6Z" fill="#e82020" /></svg></Tool>
              <Tool><svg width="16" height="15"><path d="M7 2A5.500 5.500 0 0 0 5 12.500M9 13A5.500 5.500 0 0 0 11 2.500" fill="none" stroke="#189850" strokeWidth="2.400" /><path d="M6 0L10 2.500L6 5ZM10 10L6 12.500L10 15Z" fill="#189850" /></svg></Tool>
            </ToolRow>
          </AlarmStatus>
        </AlarmPanel>
        <LocalPanel>
          <LocalTitle><Fit w={98} s={13} b c="#fff">LOCAL CONTROL</Fit></LocalTitle>
          <LocalButtons>
            <Btn><Fit w={16} s={13} b mt={2}>BP</Fit></Btn>
            <Btn><Fit w={15} s={13} b mt={2}>SS</Fit></Btn>
          </LocalButtons>
          <LocalNone><Fit w={32} s={13} b c="#ff0">NONE</Fit></LocalNone>
        </LocalPanel>
        <ClockPanel>
          <ClockBox><ClockFace><Fit w={105} s={12} c="#fff">9/9/2024 11:22:45 AM</Fit></ClockFace></ClockBox>
          <HostBox><Fit w={104} s={15} b mt={1}>DESKTOP-JS</Fit></HostBox>
        </ClockPanel>
      </Header>

      <Main>
        <LeftColumn>
          <Station><Fit w={129} s={14} b>BANGPEE STATION</Fit></Station>
          <Sidebar>
            <Bevel $h={167} $ml={10}><BevelInner>
              <Plate $h={23} $pl={57} $mt={1}><Fit w={125} s={15} b c="#0000ff">Motor No.1 Status</Fit></Plate>
              <Dark $pt={4}><StatusLines rows={motorRows} /></Dark>
            </BevelInner></Bevel>
            <Bevel $h={106} $ml={9} $mt={-3}><BevelInner>
              <Plate $h={24} $pl={58}><Fit w={125} s={15} b c="#0000ff" mt={1}>Pump No.1 Status</Fit></Plate>
              <Dark $pt={2}><StatusLines rows={pumpRows} /></Dark>
            </BevelInner></Bevel>
            <Bevel $h={169} $ml={9} $mt={1}><BevelInner>
              <Plate $h={23} $pl={57} $mt={1}><Fit w={121} s={15} b c="#0000ff" mt={1}>Drive No.1 Status</Fit></Plate>
              <Dark $pt={2}><StatusLines rows={driveRows} /></Dark>
            </BevelInner></Bevel>
            <MeasureTitle><Fit w={88} s={12} b>MEASUREMENTS</Fit></MeasureTitle>
            <MeasureTable>
              {measures.map(([label, w, value, vw, unit, uw, h]) => (
                <MeasureRow key={label} $h={h} $w={136} $valW={106}>
                  <MeasureLabel $pt={1}><Fit w={w} s={11} b>{label}</Fit></MeasureLabel>
                  <MeasureValue>
                    <Fit w={vw} s={12} ml={12}>{value}</Fit>
                    <UnitCell><Fit w={uw} s={12} b ml={uw === 20 ? 8 : 11}>{unit}</Fit></UnitCell>
                  </MeasureValue>
                </MeasureRow>
              ))}
            </MeasureTable>
            <Bevel $h={72} $ml={9}><BevelInner>
              <Dark $pt={1}><StatusLines rows={valveRows} /></Dark>
            </BevelInner></Bevel>
          </Sidebar>
        </LeftColumn>

        <Process>
          <TitlePlate><Fit w={131} s={23} b stretch>PUMP NO.1</Fit></TitlePlate>
          <PumpTabs>
            {[1, 2, 3, 4, 5, 6, 7].map((n) => (
              <Btn key={n}><Fit w={72} s={14} b c="#282828" ml={2}>{`PUMP NO.${n}`}</Fit></Btn>
            ))}
          </PumpTabs>
          <Plant />
          <LowerRow>
            <Sunken $w={279} $h={256}>
              <VibrationInner>
                {vibrations.map(([label, w], i) => (
                  <MeasureRow key={label} $h={i % 3 === 1 ? 17 : 16} $w={150} $valW={107}>
                    <MeasureLabel $pt={0}><Fit w={w} s={11} b mt={-2}>{label}</Fit></MeasureLabel>
                    <MeasureValue>
                      <Fit w={27} s={12} ml={9}>0.000</Fit>
                      <UnitCell><Fit w={32} s={12} b ml={3}>mm/s</Fit></UnitCell>
                    </MeasureValue>
                  </MeasureRow>
                ))}
              </VibrationInner>
            </Sunken>

            <MiddleStack>
              <Sunken $w={278} $h={95} $bg="#a0a0a4">
                <PressTitle $h={35} $pl={73} $pt={2}><Fit w={114} s={20} b>PRESSURE</Fit></PressTitle>
                <TealRow $mt={1}>
                  <Fit w={138} s={12} b ml={3} mt={-1}>SUCTION PRESSURE</Fit>
                  <TealValue $ml={24} $pl={25}><Fit w={22} s={12}>2.94</Fit></TealValue>
                  <Fit w={10} s={13} b ml={6}>m</Fit>
                </TealRow>
                <TealRow $mt={0}>
                  <Fit w={160} s={12} b ml={1} mt={-2}>DISCHARGE PRESSURE</Fit>
                  <TealValue $ml={3} $pl={22}><Fit w={27} s={12} mt={-1}>30.18</Fit></TealValue>
                  <Fit w={10} s={13} b ml={7} mt={2}>m</Fit>
                </TealRow>
              </Sunken>
              <Sunken $w={279} $h={82} $ml={1} $mt={3} $bg="#a0a0a4">
                <PressTitle $h={35} $pl={89} $pt={0}><Fit w={76} s={17} b mt={-1}>VIBRATION</Fit></PressTitle>
                <SetpointRow>
                  <Fit w={41} s={12} ml={9} mt={-2}>Setpoint</Fit>
                  <DashedInput><Fit w={28} s={14}>0.00</Fit></DashedInput>
                  <Fit w={27} s={14} ml={5} mt={-3}>mm/s</Fit>
                </SetpointRow>
              </Sunken>
            </MiddleStack>

            <Faceplate $w={318} $h={236} $ml={4} $mt={38} $bg="#008080" $hi="#00e8e8" $lo="#004c4c">
              <FaceLeft $pl={8} $w={197}>
                <FaceTitle $pl={120} $h={29} $pt={6}><Fit w={55} s={14} b>PUMP01</Fit></FaceTitle>
                <Black $h={138} $col>
                  <BlackRow $mt={13} $pl={30}><Fit w={23} s={12} c={CYAN} mt={4}>REM</Fit><Fit w={28} s={12} c={CYAN} ml={74}>AUTO</Fit></BlackRow>
                  <BlackRow $mt={84} $pl={8}><Fit w={45} s={12} c={CYAN}>RUNNING</Fit><Fit w={61} s={12} c={CYAN} ml={49}>MCB ONLINE</Fit></BlackRow>
                </Black>
                <Black $h={24} $mt={4}><Fit w={15} s={14} c="#fff" ml={12} mt={2}>PV</Fit><Fit w={24} s={13} c="#fff" ml={57}>535</Fit><Fit w={22} s={13} c="#fff" ml={34} mt={2}>rpm</Fit></Black>
                <Black $h={24} $mt={4}><Fit w={18} s={14} c="#fff" ml={12} mt={1}>SP</Fit><Field $ml={28} $mt={-2}><Fit w={17} s={13}>300</Fit></Field><Fit w={22} s={12} c="#fff" ml={40}>rpm</Fit></Black>
              </FaceLeft>
              <Keys $pt={34} $pl={0}>
                <Btn $w={110} $h={21}><Fit w={72} s={14} b>AUTO START</Fit></Btn>
                <Btn $w={110} $h={20}><Fit w={70} s={14} b>AUTO  STOP</Fit></Btn>
                <KeyRow $mt={3} $gap={2}>
                  <Btn $w={54} $h={21} $bg={RED}><Fit w={32} s={13} c="#300">AUTO</Fit></Btn>
                  <Btn $w={54} $h={21} $bg={GREEN}><Fit w={24} s={13} c="#030">MAN</Fit></Btn>
                </KeyRow>
                <KeyRow $mt={3} $gap={2} $pl={1}><Lamp $on /><Lamp /></KeyRow>
                <KeyRow $mt={1} $gap={1}>
                  <Btn $w={54} $h={30} $bg={RED}><Fit w={41} s={14} b c="#200">ONLINE</Fit></Btn>
                  <Btn $w={54} $h={30} $bg={GREEN}><Fit w={46} s={14} b c="#020">OFFLINE</Fit></Btn>
                </KeyRow>
                <KeyRow $mt={6} $gap={2} $pl={1}><Lamp $on /><Lamp /></KeyRow>
                <KeyRow $mt={1} $gap={1}>
                  <Btn $w={54} $h={30} $bg={RED}><Fit w={27} s={14} b c="#200">RUN</Fit></Btn>
                  <Btn $w={54} $h={30} $bg={GREEN}><Fit w={34} s={14} b c="#789078" etched>STOP</Fit></Btn>
                </KeyRow>
                <KeyRow $mt={4}><Btn $w={109} $h={21} $bg="#f08828"><Fit w={80} s={13} c="#201000">RESET FAULT</Fit></Btn></KeyRow>
              </Keys>
            </Faceplate>

            <Faceplate $w={323} $h={236} $ml={7} $mt={39} $bg="#a0a0a4" $hi="#e0e0e4" $lo="#707074">
              <FaceLeft $pl={10} $w={199}>
                <FaceTitle $pl={109} $h={32} $pt={5}><Fit w={30} s={14} b>DV.1</Fit></FaceTitle>
                <Black $h={60} $col>
                  <BlackRow $mt={11} $pl={27}><Fit w={20} s={12} c={CYAN} mt={2}>REM</Fit><Fit w={28} s={12} c={CYAN} ml={88}>AUTO</Fit></BlackRow>
                  <BlackRow $mt={14} $pl={67}><Fit w={63} s={12} c={CYAN}>FULLY OPEN</Fit></BlackRow>
                </Black>
                <Black $h={24} $mt={44} $ml={1}><Fit w={18} s={13} c="#fff" ml={11} mt={-5}>PV</Fit><Fit w={37} s={13} c="#fff" ml={54} mt={3}>100.14</Fit><Fit w={10} s={12} c="#fff" ml={24} mt={-1}>%</Fit></Black>
                <Black $h={43} $mt={7} $top $ml={1}><Fit w={16} s={13} c="#fff" ml={11} mt={4}>SP</Fit><Field $ml={38} $mt={4}><Fit w={33} s={12}>100.00</Fit></Field><Fit w={9} s={12} c="#fff" ml={34} mt={4}>%</Fit></Black>
              </FaceLeft>
              <Keys $pt={31} $pl={0}>
                <KeyRow $mt={0} $gap={2}>
                  <Btn $w={55} $h={21} $bg={RED}><Fit w={32} s={13} c="#300">AUTO</Fit></Btn>
                  <Btn $w={54} $h={21} $bg={GREEN}><Fit w={24} s={13} c="#030">MAN</Fit></Btn>
                </KeyRow>
                <KeyRow $mt={6} $gap={2} $pl={2}><Lamp $on $h={12} /><Lamp $h={12} /></KeyRow>
                <KeyRow $mt={1} $gap={1} $pl={1}>
                  <Btn $w={54} $h={30} $bg={RED}><Fit w={32} s={14} b c="#200">OPEN</Fit></Btn>
                  <Btn $w={54} $h={30} $bg={GREEN}><Fit w={40} s={14} b c="#020">CLOSE</Fit></Btn>
                </KeyRow>
                <KeyRow $mt={6} $pl={27}><Lamp $h={12} /></KeyRow>
                <KeyRow $mt={0} $pl={27}><Btn $w={53} $h={31} $bg="#c0c0c0"><Fit w={34} s={14} b>STOP</Fit></Btn></KeyRow>
                <KeyRow $mt={2}><Btn $w={108} $h={21}><Fit w={80} s={13} c="#909090" etched>RESET FAULT</Fit></Btn></KeyRow>
                <KeyRow $mt={7} $pl={1}><Btn $w={108} $h={21}><Fit w={73} s={13}>CONFIRM SP</Fit></Btn></KeyRow>
              </Keys>
            </Faceplate>
          </LowerRow>
        </Process>
      </Main>

      <NavBar>
        {navs.map(([x0, x1, size, lines, drop], i) => (
          <NavSlot key={i} $w={x1 - x0} $ml={x0 - (i ? navs[i - 1][1] : 8)} $mt={drop}>
            {lines.map(([t, w]) => <Fit key={t} w={w} s={size}>{t}</Fit>)}
          </NavSlot>
        ))}
        <PicButton $ml={144}>
          <PicArt width="75" height="39">
            <ellipse cx="54" cy="9.500" rx="11" ry="6.500" fill="none" stroke="#98a4a8" strokeWidth="1.800" />
            <path d="M3 28L30 12L34 7L44 4L50 8L46 14L36 18L28 18L22 23L16 23Z" fill="#88949a" stroke="#c8d0d4" strokeWidth=".8" />
            <path d="M5 27L36 12" stroke="#50585c" strokeWidth="1.200" />
            <path d="M46 12Q54 8 60 13Q64 18 58 22L52 22L45 32L40 38L34 36L38 30L44 22Z" fill="#f0b840" stroke="#a87418" strokeWidth=".8" />
            <path d="M55 14L59 27L53 34" fill="none" stroke="#f8d060" strokeWidth="4" />
            <circle cx="54" cy="14" r="2" fill="#0086c8" />
          </PicArt>
          <PicText $x={14}><Fit w={50} s={20} c="#fff">Login</Fit></PicText>
        </PicButton>
        <PicButton $ml={6}>
          <PicArt width="75" height="39">
            <path d="M20 23V17Q20 6 35 6Q50 6 50 17V23" fill="none" stroke="#b8c4cc" strokeWidth="7" />
            <path d="M20 23V17Q20 6 35 6Q50 6 50 17" fill="none" stroke="#dce4e8" strokeWidth="2" />
            <rect x="14" y="21" width="47" height="17" rx="1" fill="#1070e0" />
            <path d="M14 38V22H38L61 38Z" fill="#38a0ff" />
            <path d="M36 25L42 33H30Z" fill="#0848a0" />
          </PicArt>
          <PicText $x={6}><Fit w={64} s={20} c="#fff">Logout</Fit></PicText>
        </PicButton>
      </NavBar>

      <Message>
        <MessageFrame>
          <MessageText>
            <svg width="14" height="14"><circle cx="7" cy="7" r="7" fill="#1c98dc" /><path d="M6 6H8V11H6ZM6 3H8V5H6Z" fill="#fff" /></svg>
            <Fit w={140} s={13} ml={4} f={COND}>Set BP\BP_PUMP_FP_NO 1</Fit>
          </MessageText>
          <SmallButton $w={34} $ml={5}><Fit w={24} s={13} f={COND}>Clear</Fit></SmallButton>
          <SmallButton $w={48} $ml={6} $focus><Fit w={38} s={13} f={COND}>Clear All</Fit></SmallButton>
        </MessageFrame>
      </Message>
      <TaskEdge />
    </Screen>
  );
}
